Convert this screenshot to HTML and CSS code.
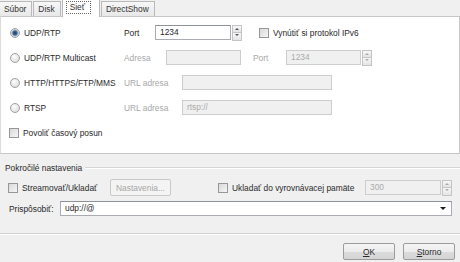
FILE: index.html
```html
<!DOCTYPE html>
<html lang="sk">
<head>
    <meta charset="UTF-8">
    <title>Otvoriť médium</title>
    <link rel="stylesheet" href="styles.css">
</head>
<body>
    <div class="dialog">
        <div class="tabs">
            <div class="tab">Súbor</div>
            <div class="tab">Disk</div>
            <div class="tab active"><span class="focus">Sieť</span></div>
            <div class="tab">DirectShow</div>
        </div>

        <div class="pane">
            <div class="row">
                <label class="opt"><span class="radio checked"></span>UDP/RTP</label>
                <span class="lbl w-port">Port</span>
                <span class="field w-76">1234</span>
                <span class="spin"><i class="up"></i><i class="down"></i></span>
                <label class="check ipv6"><span class="box"></span>Vynútiť si protokol IPv6</label>
            </div>
            <div class="row">
                <label class="opt"><span class="radio"></span>UDP/RTP Multicast</label>
                <span class="lbl off w-addr">Adresa</span>
                <span class="field off w-75"></span>
                <span class="lbl off port2">Port</span>
                <span class="field off w-75">1234</span>
                <span class="spin off"><i class="up"></i><i class="down"></i></span>
            </div>
            <div class="row">
                <label class="opt"><span class="radio"></span>HTTP/HTTPS/FTP/MMS</label>
                <span class="lbl off w-url">URL adresa</span>
                <span class="field off w-150"></span>
            </div>
            <div class="row">
                <label class="opt"><span class="radio"></span>RTSP</label>
                <span class="lbl off w-url">URL adresa</span>
                <span class="field off w-150">rtsp://</span>
            </div>
            <div class="row">
                <label class="check"><span class="box"></span>Povoliť časový posun</label>
            </div>
        </div>

        <div class="group">
            <div class="group-head"><span>Pokročilé nastavenia</span><span class="rule"></span></div>
            <div class="group-row first">
                <label class="check stream"><span class="box"></span>Streamovať/Ukladať</label>
                <button class="btn disabled" type="button">Nastavenia...</button>
                <label class="check cache"><span class="box"></span>Ukladať do vyrovnávacej pamäte</label>
                <span class="field off w-76">300</span>
                <span class="spin off"><i class="up"></i><i class="down"></i></span>
            </div>
            <div class="group-row">
                <span class="lbl custom">Prispôsobiť:</span>
                <span class="combo">udp://@<i class="arrow"></i></span>
            </div>
        </div>

        <div class="actions">
            <button class="btn" type="button"><u>O</u>K</button>
            <button class="btn" type="button"><u>S</u>torno</button>
        </div>
    </div>
</body>
</html>
```

FILE: styles.css
```css
body {
    margin: 0;
    background-color: #f0f0f0;
    font-family: "Liberation Sans", Arial, sans-serif;
    font-size: 8.4px;
    color: #2a2a2a;
}
.dialog {
    width: 460px;
    height: 262px;
    overflow: hidden;
}

/* tabs */
.tabs {
    display: flex;
    align-items: flex-end;
    height: 16px;
}
.tab {
    height: 14px;
    line-height: 14px;
    padding: 0 5px 0 4px;
    margin-right: 1px;
    border: 1px solid #b9b9b9;
    border-bottom: none;
    background: linear-gradient(#f7f7f7, #e8e8e8);
    color: #333;
}
.tab:first-child {
    border-left: none;
}
.tab.active {
    position: relative;
    height: 17px;
    line-height: 15px;
    margin-bottom: -1px;
    padding: 0 8px 0 3px;
    background: #fff;
    z-index: 1;
}
.focus {
    border: 1px dotted #666;
    padding: 0 5px 1px 3px;
}

/* network pane */
.pane {
    height: 133px;
    padding: 3px 0 0 8px;
    background: #fff;
    border: 1px solid #c7c7c7;
    border-left: 1px solid #dcdcdc;
}
.row {
    display: flex;
    align-items: center;
    height: 25px;
}
.opt {
    display: flex;
    align-items: center;
    width: 115px;
}
.check {
    display: flex;
    align-items: center;
}
.radio {
    width: 8px;
    height: 8px;
    margin: 0 4px 0 1px;
    border: 1px solid #a0a0a0;
    border-radius: 50%;
    background: radial-gradient(circle at 40% 35%, #fdfdfd, #d6d6d6);
}
.radio.checked {
    background: radial-gradient(circle, #1d3c63 0, #3e6897 2px, #9fb4ca 3px, #e8e8e8 4px);
}
.box {
    width: 8px;
    height: 8px;
    margin-right: 4px;
    border: 1px solid #979797;
    background: linear-gradient(135deg, #d9d9d9, #f6f6f6);
}
.lbl {
    flex: none;
}
.off {
    color: #a8a8a8;
}
.w-port { width: 31px; }
.w-addr { width: 42px; }
.w-url { width: 58px; }
.port2 { width: 33px; margin-left: 12px; }

.field {
    box-sizing: border-box;
    height: 15px;
    line-height: 13px;
    padding: 0 4px;
    background: #fff;
    border: 1px solid #a9acb3;
    border-top-color: #8e9299;
}
.field.off {
    background: #f0f0f0;
    border-color: #cdcdcd;
    color: #ababab;
}
.w-75 { width: 75px; }
.w-76 { width: 76px; }
.w-150 { width: 150px; }

.spin {
    display: flex;
    flex-direction: column;
    width: 10px;
    height: 16px;
    margin-left: 1px;
}
.spin i {
    position: relative;
    flex: 1;
    border: 1px solid #c4c4c4;
    background: linear-gradient(#f8f8f8, #e4e4e4);
}
.spin i + i {
    border-top: none;
}
.spin i::after {
    content: "";
    position: absolute;
    left: 2px;
    top: 2px;
    border-left: 2px solid transparent;
    border-right: 2px solid transparent;
}
.spin .up::after {
    border-bottom: 2px solid #555;
}
.spin .down::after {
    top: 1px;
    border-top: 2px solid #555;
}
.spin.off i::after {
    border-bottom-color: #aaa;
    border-top-color: #aaa;
}
.ipv6 {
    margin-left: 17px;
}

/* advanced group */
.group {
    margin-top: 2px;
    height: 77px;
    border-bottom: 1px solid #d2d2d2;
    box-shadow: 0 1px 0 #fff;
}
.group-head {
    display: flex;
    align-items: center;
    height: 13px;
    padding: 5px 0 0 5px;
}
.rule {
    flex: 1;
    margin-left: 3px;
    border-top: 1px solid #d5d5d5;
    border-bottom: 1px solid #fff;
}
.group-row {
    display: flex;
    align-items: center;
    height: 21px;
}
.group-row.first {
    margin-top: 3px;
}
.stream {
    width: 102px;
    margin-left: 8px;
}
.cache {
    width: 147px;
    margin-left: 47px;
}
.custom {
    width: 51px;
    margin-left: 9px;
}
.combo {
    position: relative;
    box-sizing: border-box;
    width: 392px;
    height: 15px;
    line-height: 13px;
    padding: 0 4px;
    background: #fff;
    border: 1px solid #a9acb3;
    border-top-color: #8e9299;
}
.arrow {
    position: absolute;
    right: 5px;
    top: 5px;
    border-left: 3px solid transparent;
    border-right: 3px solid transparent;
    border-top: 3px solid #1a1a1a;
}

/* buttons */
.btn {
    box-sizing: border-box;
    width: 52px;
    height: 17px;
    padding: 0;
    font: inherit;
    color: #2a2a2a;
    border: 1px solid #9c9c9c;
    border-radius: 2px;
    background: linear-gradient(#f5f5f5 0, #ececec 50%, #dcdcdc 51%, #d4d4d4 100%);
}
.btn.disabled {
    width: 61px;
    color: #a6a6a6;
    border-color: #c8c8c8;
    background: #f4f4f4;
}
.actions {
    display: flex;
    justify-content: flex-end;
    gap: 8px;
    padding: 9px 5px 0 0;
}
```
